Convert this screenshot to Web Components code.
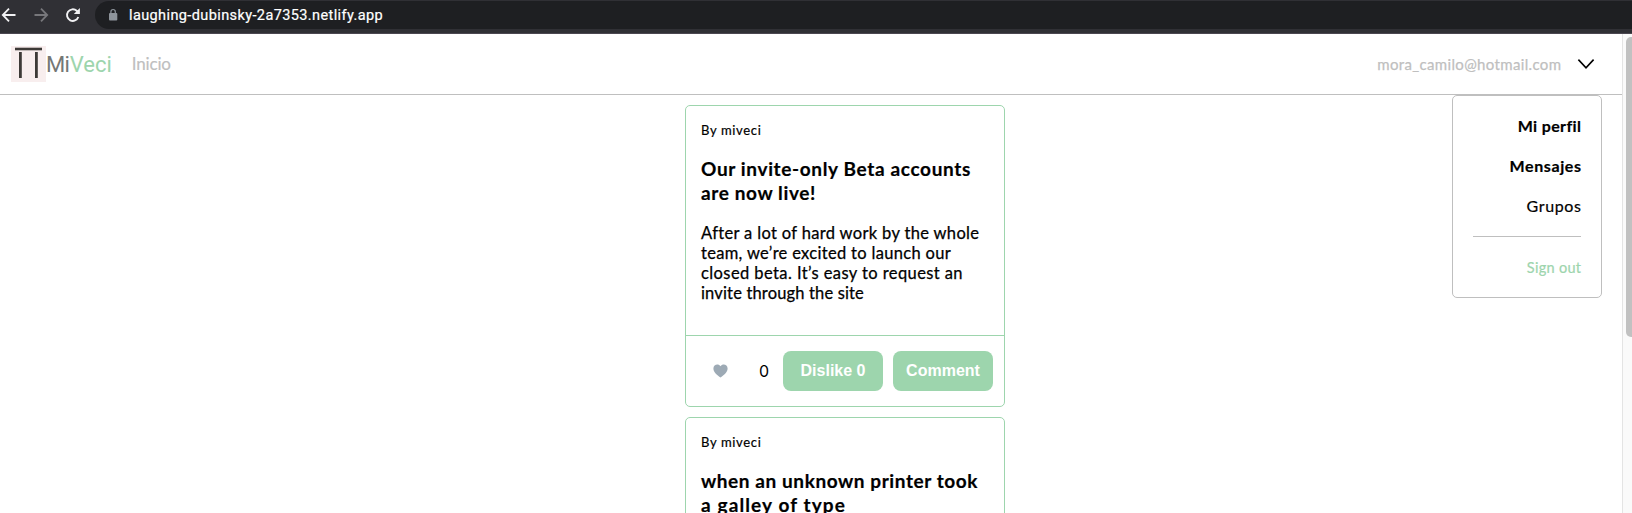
<!DOCTYPE html>
<html lang="es"><head><meta charset="utf-8"><title>MiVeci</title>
<style>
html,body{margin:0;height:100%;overflow:hidden;background:#fff}
body{font-family:Lato,"Liberation Sans",sans-serif;color:#000}
</style></head><body>
<mv-browser></mv-browser>
<script>
const define=(name,html,setup)=>customElements.define(name,class extends HTMLElement{
  connectedCallback(){
    if(this.shadowRoot)return;
    this.attachShadow({mode:'open'}).innerHTML=html;
    if(setup)setup.call(this,this.shadowRoot);
  }
});

// One line of text tracked so that it fills the width given in "w".
define('mv-line',`<style>
:host{display:block;white-space:nowrap}
span{display:inline-block;white-space:pre}
</style><span></span>`,function(root){
  const s=root.querySelector('span'),t=this.getAttribute('text');
  s.textContent=t;
  const w=+this.getAttribute('w');
  if(w){const gap=(w-s.getBoundingClientRect().width)/t.length;s.style.letterSpacing=gap+'px';s.style.marginRight=-gap+'px';}
});

define('mv-toolbar',`<style>
:host{display:flex;box-sizing:border-box;height:34px;background:#303035;border-bottom:1px solid #4b4750;padding:1px 0 4px;align-items:stretch}
.nav{display:flex;width:95px;align-items:center;flex:none}
svg{display:block;flex:none}
.address{flex:1;display:flex;align-items:center;background:#1e1f22;border-radius:14px 0 0 14px;padding-left:13px}
mv-line{font:400 14.5px/20px Roboto,sans-serif;-webkit-text-stroke:.2px;color:#fff;margin:2px 0 0 11px}
</style>
<div class="nav">
<svg width="32" height="28" viewBox="0 0 32 28" fill="none" stroke="#f1f1f3" stroke-width="1.8"><path d="M15.5 14H3M9 7.7 2.8 14 9 20.3"/></svg>
<svg width="32" height="28" viewBox="0 0 32 28" fill="none" stroke="#77777b" stroke-width="1.8"><path d="M2.5 14H15M9 7.7 15.2 14 9 20.3"/></svg>
<svg width="31" height="28" viewBox="0 0 31 28" fill="none" stroke="#f1f1f3" stroke-width="1.9"><path d="M14.3 16a5.8 5.8 0 1 1-1.6-6.2l1.8 1.8"/><path d="M15.9 7v6H9.8z" fill="#f1f1f3" stroke="none"/></svg>
</div>
<div class="address">
<svg width="10" height="14" viewBox="0 0 10 14"><rect x="1" y="5" width="8.3" height="7.6" rx="1" fill="#8e949b"/><path d="M2.9 5.5V3.7a2.2 2.2 0 0 1 4.4 0v1.8" fill="none" stroke="#8e949b" stroke-width="1.2"/></svg>
<mv-line text="laughing-dubinsky-2a7353.netlify.app" w="254"></mv-line>
</div>`);

define('mv-header',`<style>
:host{display:flex;box-sizing:border-box;height:61px;align-items:center;border-bottom:1px solid #bfbfbf;padding:0 27px 0 11px}
svg{display:block;flex:none}
.brand{font:22px/28px Roboto,sans-serif;color:#747775;display:flex;padding-top:2px}
.veci{color:#9dd5ad}
.home{font-size:17px;line-height:24px;color:#bfbfbf;margin-left:20px;-webkit-text-stroke:.2px}
.user{font-size:15px;line-height:22px;color:#bfbfbf;margin-left:auto;margin-right:16px;-webkit-text-stroke:.25px}
</style>
<svg width="35" height="36" viewBox="0 0 35 36"><rect width="35" height="36" fill="#f8eeee"/><path d="M4 3h27" stroke="#3d3a37" stroke-width="2.6"/><path d="M9.4 6v26M25.4 6v26" stroke="#3d3a37" stroke-width="2.8"/></svg>
<div class="brand"><mv-line text="Mi" w="23"></mv-line><mv-line class="veci" text="Veci" w="42"></mv-line></div>
<mv-line class="home" text="Inicio" w="39"></mv-line>
<mv-line class="user" text="mora_camilo@hotmail.com" w="184"></mv-line>
<svg width="18" height="12" viewBox="0 0 18 12"><path d="M1.4 1.6 9 9.8l7.6-8.2" fill="none" stroke="#000" stroke-width="1.6"/></svg>`);

define('mv-menu',`<style>
:host{display:flex;flex-direction:column;align-items:flex-end;box-sizing:border-box;width:150px;height:203px;border:1px solid #bfbfbf;border-radius:5px;background:#fff;padding:20px 20px 0;font-size:16px;line-height:20px;-webkit-text-stroke:.2px}
mv-line{margin-bottom:20px}
.b{font-weight:700}
hr{width:108px;margin:0 0 21px;border:0;border-top:1px solid #bfbfbf}
.out{color:#9dd5ad;font-size:14.5px}
</style>
<mv-line class="b" text="Mi perfil" w="63.5"></mv-line>
<mv-line class="b" text="Mensajes" w="72"></mv-line>
<mv-line text="Grupos" w="55"></mv-line>
<hr>
<mv-line class="out" text="Sign out" w="54.5"></mv-line>`);

define('mv-button',`<style>
:host{display:block}
button{display:block;width:100px;height:40px;padding:0;border:0;border-radius:8px;background:#9dd5ad;color:#fff;font:700 16px/20px "Liberation Sans",sans-serif;white-space:nowrap}
</style><button><slot></slot></button>`);

define('mv-post',`<style>
:host{display:block;box-sizing:border-box;width:320px;height:302px;border:1px solid #9dd5ad;border-radius:5px;background:#fff}
:host([preview]) .actions{display:none}
.content{box-sizing:border-box;height:230px;padding:16px 15px 0;border-bottom:1px solid #9dd5ad}
.by{font-size:13px;line-height:17px;-webkit-text-stroke:.2px}
.title{font-size:19px;line-height:24px;font-weight:700;margin:18px 0 18px;-webkit-text-stroke:.2px}
.body{font-size:16.5px;line-height:20px;-webkit-text-stroke:.25px}
.actions{display:flex;align-items:center;height:70px;gap:10px}
svg{display:block;margin-left:27px}
.count{font:16px/20px Inter,sans-serif;width:10px;margin-left:21px;margin-right:4px}
</style>
<div class="content"><mv-line class="by" text="By miveci" w="60.5"></mv-line><div class="title"></div><div class="body"></div></div>
<div class="actions">
<svg width="15" height="14" viewBox="0 0 15 14"><path d="M7.5 13.6C4.5 11.4.4 8.5.4 4.5.4.2 5.5-1 7.5 2.2 9.5-1 14.6.2 14.6 4.5c0 4-4.1 6.9-7.1 9.1z" fill="#9daab5"/></svg>
<span class="count">0</span>
<mv-button>Dislike 0</mv-button><mv-button>Comment</mv-button></div>`,function(root){
  for(const part of ['title','body'])
    for(const row of (this.getAttribute('data-'+part)||'').split('|').filter(Boolean)){
      const [text,w]=row.split('~'),line=document.createElement('mv-line');
      line.setAttribute('text',text);line.setAttribute('w',w);
      root.querySelector('.'+part).append(line);
    }
});

define('mv-scrollbar',`<style>
:host{display:block;box-sizing:border-box;width:10px;border-left:1px solid #e4e4e4;background:#fafafa;padding:3px 0 0 3px;overflow:hidden}
div{width:12px;height:300px;border-radius:5px;background:#c1c1c1}
</style><div></div>`);

define('mv-browser',`<style>
:host{display:flex;flex-direction:column;height:513px;overflow:hidden}
.view{display:flex;flex:1;min-height:0}
.page{flex:1;min-width:0;position:relative;overflow:hidden}
.feed{display:flex;flex-direction:column;gap:10px;width:320px;margin:10px 0 0 685px}
mv-menu{position:absolute;right:20px;top:61px}
</style>
<mv-toolbar></mv-toolbar>
<div class="view"><div class="page"><mv-header></mv-header>
<div class="feed">
<mv-post data-title="Our invite-only Beta accounts~270|are now live!~115" data-body="After a lot of hard work by the whole~278|team, we’re excited to launch our~250|closed beta. It’s easy to request an~262|invite through the site~163"></mv-post>
<mv-post preview data-title="when an unknown printer took~277|a galley of type~145"></mv-post>
</div><mv-menu></mv-menu></div><mv-scrollbar></mv-scrollbar></div>`);
</script></body></html>
